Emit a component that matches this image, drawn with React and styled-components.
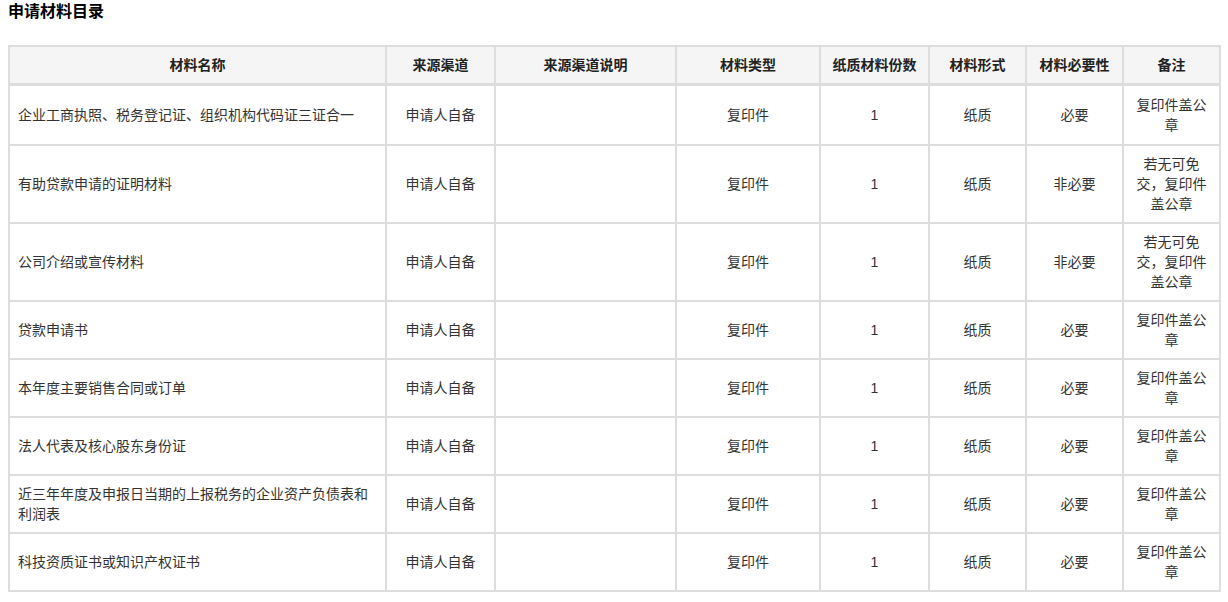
import React from 'react';
import styled, { createGlobalStyle } from 'styled-components';

const GlobalStyle = createGlobalStyle`
  body {
    margin: 0;
    background: #ffffff;
    font-family: "Liberation Sans", "Noto Sans CJK SC", sans-serif;
    color: #333333;
  }
`;

const columns = [
  { title: '材料名称', width: 377 },
  { title: '来源渠道', width: 109 },
  { title: '来源渠道说明', width: 181 },
  { title: '材料类型', width: 144 },
  { title: '纸质材料份数', width: 109 },
  { title: '材料形式', width: 97 },
  { title: '材料必要性', width: 97 },
  { title: '备注', width: 97 },
];

const STAMP = '复印件盖公章';
const OPTIONAL = '若无可免交，复印件盖公章';

const rows = [
  { name: '企业工商执照、税务登记证、组织机构代码证三证合一', need: '必要', note: STAMP },
  { name: '有助贷款申请的证明材料', need: '非必要', note: OPTIONAL },
  { name: '公司介绍或宣传材料', need: '非必要', note: OPTIONAL },
  { name: '贷款申请书', need: '必要', note: STAMP },
  { name: '本年度主要销售合同或订单', need: '必要', note: STAMP },
  { name: '法人代表及核心股东身份证', need: '必要', note: STAMP },
  { name: '近三年年度及申报日当期的上报税务的企业资产负债表和利润表', need: '必要', note: STAMP },
  { name: '科技资质证书或知识产权证书', need: '必要', note: STAMP },
];

function App() {
  return (
    <Page>
      <GlobalStyle />
      <Title>申请材料目录</Title>
      <Table>
        <colgroup>
          {columns.map((c) => (
            <col key={c.title} style={{ width: c.width }} />
          ))}
        </colgroup>
        <thead>
          <tr>
            {columns.map((c) => (
              <HeadCell key={c.title}>{c.title}</HeadCell>
            ))}
          </tr>
        </thead>
        <tbody>
          {rows.map((r, i) => (
            <tr key={r.name}>
              <Cell align="left" first={i === 0}>{r.name}</Cell>
              <Cell first={i === 0}>申请人自备</Cell>
              <Cell first={i === 0}></Cell>
              <Cell first={i === 0}>复印件</Cell>
              <Cell first={i === 0}>1</Cell>
              <Cell first={i === 0}>纸质</Cell>
              <Cell first={i === 0}>{r.need}</Cell>
              <Cell first={i === 0}>{r.note}</Cell>
            </tr>
          ))}
        </tbody>
      </Table>
    </Page>
  );
}

export default App;

const Page = styled.div`
  padding: 0 8px;
`;

const Title = styled.h3`
  margin: 0;
  padding-top: 1px;
  height: 44px;
  font-size: 16px;
  line-height: 22px;
  font-weight: bold;
  color: #000000;
`;

const Table = styled.table`
  width: 1213px;
  table-layout: fixed;
  border-collapse: collapse;
  border: 2px solid #dddddd;
  font-size: 14px;
  line-height: 20px;
`;

const HeadCell = styled.th`
  border: 2px solid #dddddd;
  border-bottom-width: 3px;
  background: #f5f5f5;
  padding: 8px;
  font-weight: bold;
  color: #222222;
  text-align: center;
`;

const Cell = styled.td`
  border: 2px solid #dddddd;
  padding: ${(props) => (props.first ? '9px 8px' : '8px')};
  height: 40px;
  text-align: ${(props) => props.align || 'center'};
  vertical-align: middle;
  color: #333333;
`;
